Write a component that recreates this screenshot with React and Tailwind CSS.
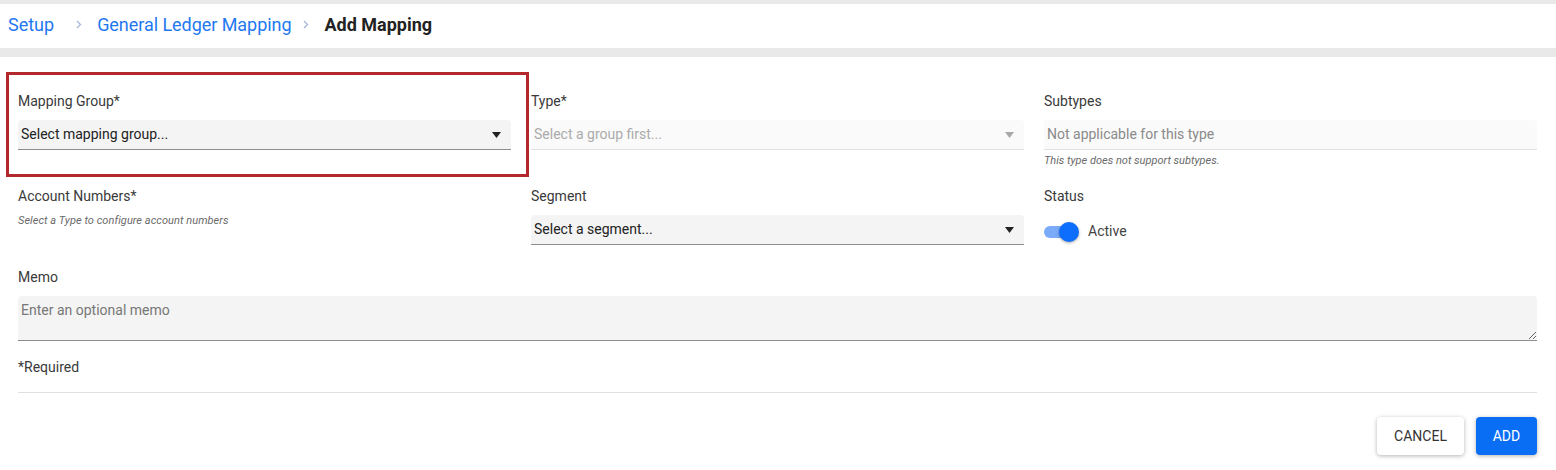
import { useState } from 'react'

function Caret({ muted }) {
  return (
    <svg width="9" height="6" viewBox="0 0 9 6" className="shrink-0">
      <path d="M0 0h9L4.5 6z" fill={muted ? '#a8a8a8' : '#222'} />
    </svg>
  )
}

function Crumb() {
  return (
    <svg width="6" height="9" viewBox="0 0 6 9" className="shrink-0">
      <path d="M1 1l3.5 3.5L1 8" fill="none" stroke="#9fb6d8" strokeWidth="1.2" />
    </svg>
  )
}

function Label({ children }) {
  return <div className="h-5 text-[14px] leading-5 text-[#3a3a3a]">{children}</div>
}

function Select({ text, disabled }) {
  return (
    <div
      className={`mt-[9px] h-[30px] flex items-center justify-between pl-[3px] pr-[10px] rounded-t-[4px] border-b text-[14px] ${
        disabled ? 'bg-[#fafafa] border-[#e2e2e2] text-[#ababab]' : 'bg-[#f4f4f4] border-[#8d8d8d] text-[#222]'
      }`}
    >
      <span>{text}</span>
      <Caret muted={disabled} />
    </div>
  )
}

export default function App() {
  const [active, setActive] = useState(true)

  return (
    <div className="w-[1556px] h-[470px] bg-white font-['Roboto',sans-serif] overflow-hidden">
      <div className="h-[4px] bg-[#e9e9e9]" />
      <div className="h-[44px] flex items-center pl-[8px] pb-[3px] text-[18px]">
        <span className="text-[#1f78f0]">Setup</span>
        <span className="ml-[22px] mr-[15px] flex"><Crumb /></span>
        <span className="text-[#1f78f0] tracking-[-0.05px]">General Ledger Mapping</span>
        <span className="ml-[12px] mr-[15px] flex"><Crumb /></span>
        <span className="font-bold text-[#222]">Add Mapping</span>
      </div>
      <div className="h-[9px] bg-[#e9e9e9]" />

      <div className="pl-[18px] pr-[19px] pt-[34px]">
        <div className="grid grid-cols-3 gap-x-[20px]">
          <div className="relative">
            <div className="absolute -left-[12px] -top-[19px] w-[523px] h-[105px] border-[3px] border-[#b3282d] pointer-events-none" />
            <Label>Mapping Group*</Label>
            <Select text="Select mapping group..." />
          </div>
          <div>
            <Label>Type*</Label>
            <Select text="Select a group first..." disabled />
          </div>
          <div>
            <Label>Subtypes</Label>
            <div className="mt-[9px] h-[30px] flex items-center pl-[3px] rounded-t-[4px] bg-[#fafafa] border-b border-[#e2e2e2] text-[14px] text-[#8a8a8a]">
              Not applicable for this type
            </div>
            <div className="mt-[5px] h-3 text-[11px] leading-3 italic text-[#6a6a6a]">This type does not support subtypes.</div>
          </div>
        </div>

        <div className="grid grid-cols-3 gap-x-[20px] mt-[19px]">
          <div>
            <Label>Account Numbers*</Label>
            <div className="mt-[9px] text-[11px] leading-3 italic text-[#6a6a6a] tracking-[0.05px]">Select a Type to configure account numbers</div>
          </div>
          <div>
            <Label>Segment</Label>
            <Select text="Select a segment..." />
          </div>
          <div>
            <Label>Status</Label>
            <div className="mt-[15px] flex items-center">
              <button
                onClick={() => setActive(!active)}
                className="relative w-[36px] h-[20px] flex items-center"
              >
                <span className="block w-[28px] h-[12px] rounded-full bg-[#7aabf8]" />
                <span className="absolute left-[15px] top-0 w-[20px] h-[20px] rounded-full bg-[#0d6efd] shadow-[0_1px_3px_rgba(0,0,0,0.35)]" />
              </button>
              <span className="ml-[8px] text-[14px] text-[#444]">Active</span>
            </div>
          </div>
        </div>

        <div className="mt-[22px]">
          <Label>Memo</Label>
          <textarea
            placeholder="Enter an optional memo"
            className="mt-[9px] block w-full h-[45px] px-[3px] py-[4px] rounded-t-[4px] bg-[#f4f4f4] border-b border-[#8d8d8d] text-[14px] text-[#222] placeholder:text-[#777] outline-none"
          />
        </div>

        <div className="mt-[16px] h-5 text-[14px] leading-5 text-[#3a3a3a]">*Required</div>
        <div className="mt-[15px] border-t border-[#e0e0e0]" />

        <div className="mt-[24px] flex justify-end gap-[12px]">
          <button className="w-[87px] h-[38px] rounded-[4px] bg-white text-[14px] text-[#333] shadow-[0_1px_4px_rgba(0,0,0,0.3)]">
            CANCEL
          </button>
          <button className="w-[61px] h-[38px] rounded-[4px] bg-[#0a6ef5] text-[14px] text-white shadow-[0_1px_4px_rgba(0,0,0,0.3)]">
            ADD
          </button>
        </div>
      </div>
    </div>
  )
}
